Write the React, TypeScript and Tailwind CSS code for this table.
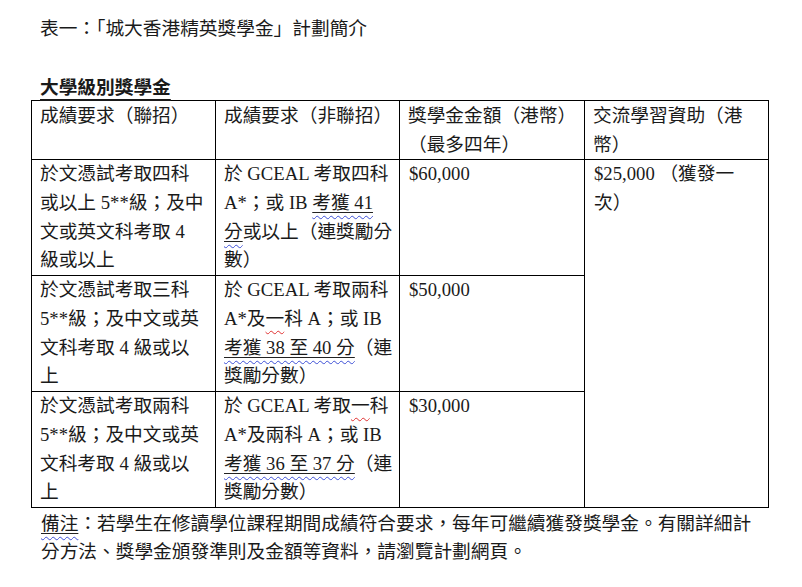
import type { ReactNode } from "react"

const font = { fontFamily: '"Liberation Serif", "Noto Sans CJK TC", serif' }

// 藍色波浪線 + 黑色底線 (Word 文法標記)
function Grammar({ children }: { children: ReactNode }) {
  return (
    <span className="underline decoration-wavy decoration-[#3d4fd6] decoration-1 underline-offset-[6px]">
      <span className="underline decoration-solid decoration-[#222] decoration-1 underline-offset-[3px]">
        {children}
      </span>
    </span>
  )
}

// 紅色波浪線 (拼字標記)
function Spell({ children }: { children: ReactNode }) {
  return (
    <span className="underline decoration-wavy decoration-[#e03131] decoration-1 underline-offset-[5px]">
      {children}
    </span>
  )
}

function Lines({ lines }: { lines: ReactNode[] }) {
  return (
    <>
      {lines.map((l, i) => (
        <div key={i} className="whitespace-nowrap">
          {l}
        </div>
      ))}
    </>
  )
}

const rows = [
  {
    jupas: ["於文憑試考取四科", "或以上 5**級；及中", "文或英文科考取 4", "級或以上"],
    nonJupas: [
      "於 GCEAL 考取四科",
      <>A*；或 IB <Grammar>考獲 41</Grammar></>,
      <><Grammar>分</Grammar>或以上（連獎勵分</>,
      "數）",
    ],
    amount: "$60,000",
  },
  {
    jupas: ["於文憑試考取三科", "5**級；及中文或英", "文科考取 4 級或以", "上"],
    nonJupas: [
      "於 GCEAL 考取兩科",
      <>A*及<Spell>一</Spell>科 A；或 IB</>,
      <><Grammar>考獲 38 至 40 分</Grammar>（連</>,
      "獎勵分數）",
    ],
    amount: "$50,000",
  },
  {
    jupas: ["於文憑試考取兩科", "5**級；及中文或英", "文科考取 4 級或以", "上"],
    nonJupas: [
      <>於 GCEAL 考取<Spell>一</Spell>科</>,
      "A*及兩科 A；或 IB",
      <><Grammar>考獲 36 至 37 分</Grammar>（連</>,
      "獎勵分數）",
    ],
    amount: "$30,000",
  },
]

export default function App() {
  return (
    <div className="w-[802px] h-[587px] bg-white text-[#1a1a1a] text-[18.7px]" style={font}>
      <div className="pl-[40px] pt-[14px] leading-[29px]">表一：「城大香港精英獎學金」計劃簡介</div>

      <div className="pl-[40px] mt-[32px] leading-[25px] font-bold">
        <span className="underline decoration-[1.5px] underline-offset-[5px]">大學級別獎學金</span>
      </div>

      <table className="ml-[31px] w-[737px] table-fixed border-collapse leading-[29px]">
        <colgroup>
          <col className="w-[184px]" />
          <col className="w-[184px]" />
          <col className="w-[185px]" />
          <col className="w-[184px]" />
        </colgroup>
        <thead>
          <tr>
            <th className="border border-black pl-[8px] text-left align-top font-normal">
              <Lines lines={["成績要求（聯招）", "\u00a0"]} />
            </th>
            <th className="border border-black pl-[8px] text-left align-top font-normal">
              <Lines lines={["成績要求（非聯招）"]} />
            </th>
            <th className="border border-black pl-[8px] text-left align-top font-normal">
              <Lines lines={["獎學金金額（港幣）", "（最多四年）"]} />
            </th>
            <th className="border border-black pl-[8px] text-left align-top font-normal">
              <Lines lines={["交流學習資助（港", "幣）"]} />
            </th>
          </tr>
        </thead>
        <tbody className="leading-[28.75px]">
          {rows.map((r, i) => (
            <tr key={i}>
              <td className="border border-black pl-[8px] align-top">
                <Lines lines={r.jupas} />
              </td>
              <td className="border border-black pl-[8px] align-top">
                <Lines lines={r.nonJupas} />
              </td>
              <td className="border border-black pl-[9px] align-top">
                <Lines lines={[r.amount]} />
              </td>
              {i === 0 && (
                <td rowSpan={3} className="border border-black pl-[9px] align-top">
                  <Lines lines={["$25,000 （獲發一", "次）"]} />
                </td>
              )}
            </tr>
          ))}
        </tbody>
      </table>

      <div className="pl-[41px] mt-[2px] leading-[28px]">
        <div className="whitespace-nowrap">
          <Grammar>備注</Grammar>：若學生在修讀學位課程期間成績符合要求，每年可繼續獲發獎學金。有關詳細計
        </div>
        <div className="whitespace-nowrap">分方法、獎學金頒發準則及金額等資料，請瀏覽計劃網頁。</div>
      </div>
    </div>
  )
}
